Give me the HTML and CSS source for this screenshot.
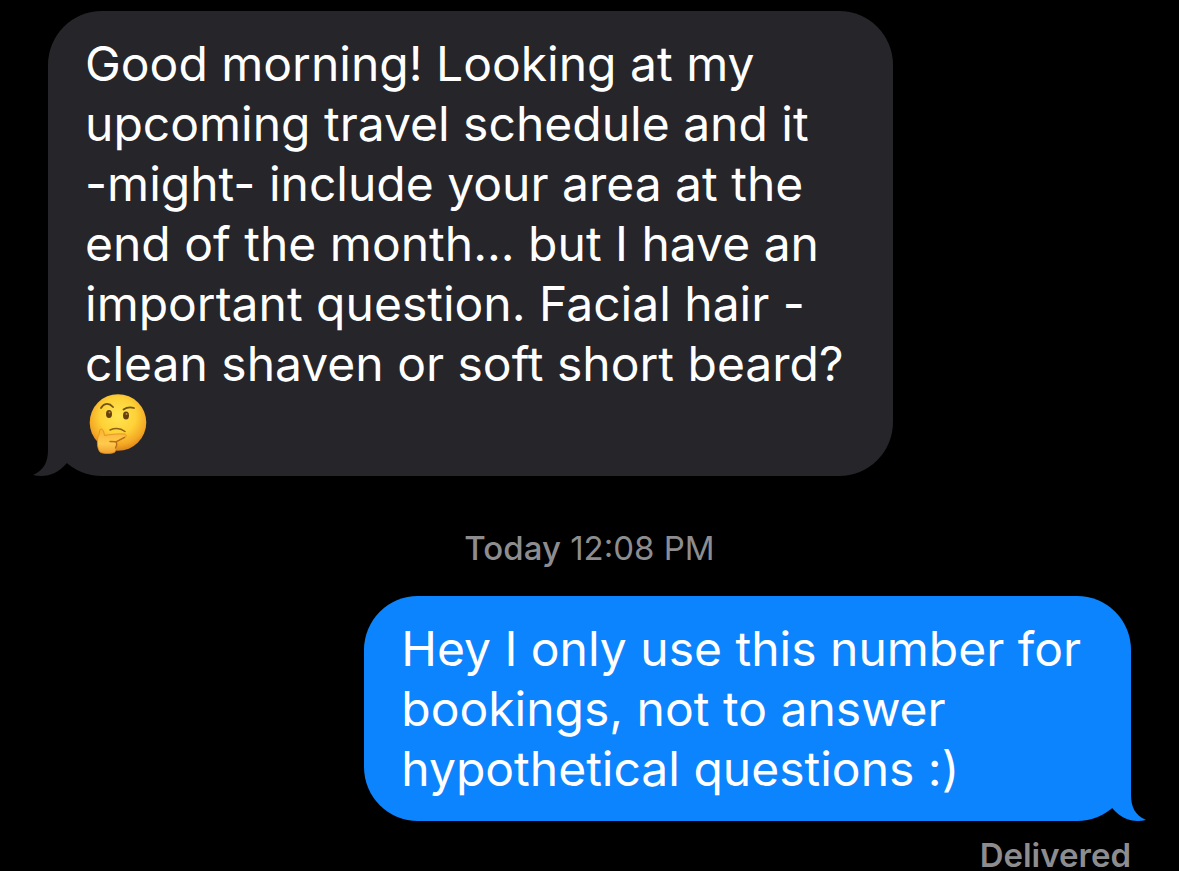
FILE: index.html
```
<!DOCTYPE html>
<html lang="en">
<head>
    <meta charset="UTF-8">
    <meta name="viewport" content="width=device-width, initial-scale=1.0">
    <title>Messages</title>
    <link rel="stylesheet" href="styles.css">
</head>
<body>
    <main class="conversation">
        <div class="bubble received">
            <p>Good morning! Looking at my<br>upcoming travel schedule and it<br>-might- include your area at the<br>end of the month... but I have an<br>important question. Facial hair -<br>clean shaven or soft short beard?</p>
            <svg class="emoji" viewBox="0 0 60 60" role="img" aria-label="Thinking face">
                <defs>
                    <radialGradient id="face" cx="50%" cy="38%" r="64%">
                        <stop offset="0" stop-color="#ffe552"/>
                        <stop offset="0.5" stop-color="#fed137"/>
                        <stop offset="0.8" stop-color="#f4a824"/>
                        <stop offset="1" stop-color="#d97f18"/>
                    </radialGradient>
                    <linearGradient id="hand" x1="0" y1="0" x2="0" y2="1">
                        <stop offset="0" stop-color="#f9b234"/>
                        <stop offset="0.6" stop-color="#ffcb4e"/>
                        <stop offset="1" stop-color="#f3a02e"/>
                    </linearGradient>
                </defs>
                <circle cx="30" cy="28.5" r="28.3" fill="url(#face)"/>
                <path d="M13 14c3-5 8-5.500 12-1" fill="none" stroke="#6f5214" stroke-width="1.800" stroke-linecap="round"/>
                <path d="M35.500 15.500c3-2 7-2.500 10.500-1.500" fill="none" stroke="#6f5214" stroke-width="1.800" stroke-linecap="round"/>
                <ellipse cx="21" cy="20" rx="3" ry="4" fill="#65400f"/>
                <ellipse cx="38" cy="21.500" rx="3" ry="4" fill="#65400f"/>
                <circle cx="21.500" cy="18.500" r="1" fill="#b98a3a"/>
                <circle cx="38.500" cy="20" r="1" fill="#b98a3a"/>
                <path d="M22 36c5-2 11-1.500 15 1.500" fill="none" stroke="#8a6216" stroke-width="1.500" stroke-linecap="round"/>
                <path d="M13 35c2 0 3 3 3.500 6.500 6-1 13-2 19.500-1.500 3 0 3 3 0 4l-8 4c2 3 0 8-1 10-3 2-12 2-15 0-3-4-3-10-2-15 2-3 1-8 3-8z" fill="url(#hand)" stroke="#dd8d1f" stroke-width=".8"/>
                <path d="M36.500 43.300l-8.500 4.500-6-.3M28 48c1.500 2 .5 4-.5 6" fill="none" stroke="#b96d14" stroke-width="1.400" stroke-linecap="round"/>
            </svg>
            <svg class="tail" viewBox="0 0 40 60" aria-hidden="true">
                <path d="M15 0v34c0 12-4 20-15 25 13 3 24-1 33-11l7-8V0z"/>
            </svg>
        </div>

        <div class="timestamp"><b>Today</b> 12:08 PM</div>

        <div class="bubble sent">
            <p>Hey I only use this number for<br>bookings, not to answer<br>hypothetical questions :)</p>
            <svg class="tail" viewBox="0 0 40 60" aria-hidden="true">
                <path d="M15 0v34c0 12-4 20-15 25 13 3 24-1 33-11l7-8V0z"/>
            </svg>
        </div>

        <div class="status">Delivered</div>
    </main>
</body>
</html>
```
FILE: styles.css
```
body {
    margin: 0;
    background-color: #000;
    color: #fff;
    font-family: Inter, "Liberation Sans", sans-serif;
}

.conversation {
    display: flex;
    flex-direction: column;
    padding: 11px 48px 0;
}

.bubble {
    position: relative;
    padding: 23px 50px 22px 37px;
    border-radius: 54px;
    font-size: 48px;
    line-height: 60px;
    white-space: nowrap;
}

.bubble p {
    margin: 0;
}

.received {
    align-self: flex-start;
    background-color: #26252a;
}

.sent {
    align-self: flex-end;
    background-color: #0b84fe;
}

.emoji {
    display: block;
    width: 60px;
    height: 60px;
    margin-left: 3px;
}

.tail {
    position: absolute;
    bottom: 0;
    left: -15px;
    width: 40px;
    height: 60px;
    fill: #26252a;
}

.sent .tail {
    left: auto;
    right: -15px;
    fill: #0b84fe;
    transform: scaleX(-1);
}

.timestamp {
    padding: 51px 0 27px;
    color: #8d8d8f;
    font-size: 33px;
    line-height: 42px;
    text-align: center;
}

.timestamp b {
    font-weight: 500;
}

.status {
    padding-top: 19px;
    color: #8d8d8f;
    font-size: 33px;
    font-weight: 600;
    line-height: 30px;
    text-align: right;
}
```
